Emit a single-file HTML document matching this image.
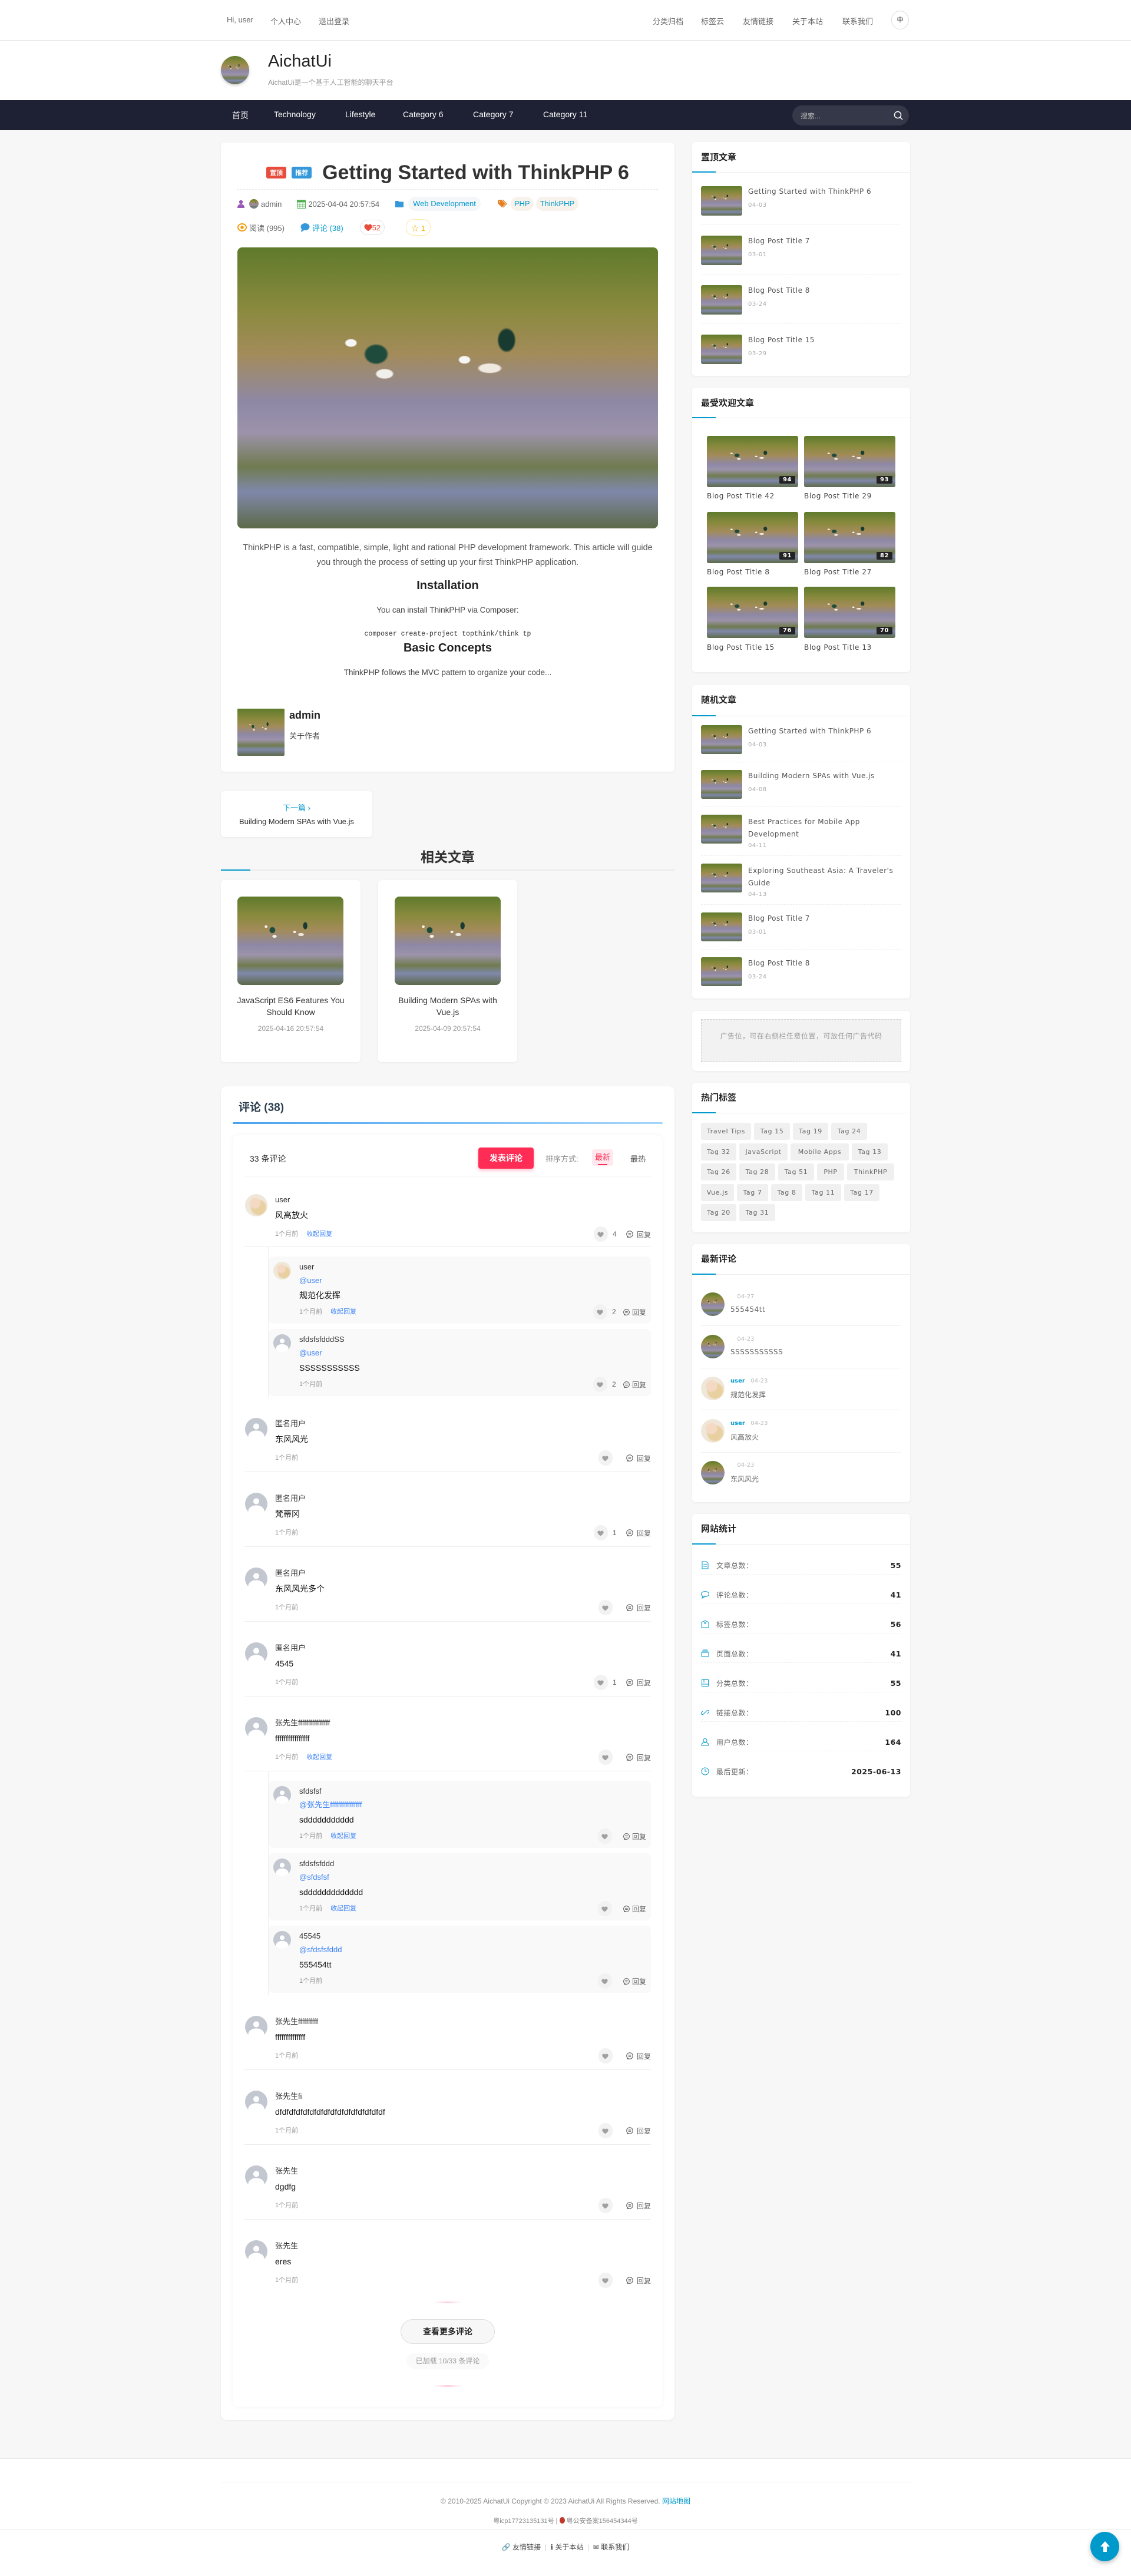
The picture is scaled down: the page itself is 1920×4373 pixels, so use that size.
<!DOCTYPE html>
<html><head><meta charset="utf-8"><style>
*{margin:0;padding:0;box-sizing:border-box}
body{width:1920px;height:4373px;background:#f7f7f7;font-family:"Liberation Sans","Noto Sans CJK SC",sans-serif;color:#333;position:relative;overflow:hidden}
.a{position:absolute}
.card{position:absolute;background:#fff;border-radius:6px;box-shadow:0 1px 4px rgba(0,0,0,.06)}
.bird{position:absolute;overflow:hidden;background:linear-gradient(180deg,#5f7a2c 0%,#8a8a3e 22%,#a38b5a 38%,#8e88a6 55%,#9c93aa 66%,#707b50 78%,#7f88aa 87%,#5d6a48 100%)}
.bird::before{content:"";position:absolute;inset:0;background:radial-gradient(ellipse 4% 5% at 33% 38%,#1f4b3d 0 60%,transparent 75%),radial-gradient(ellipse 3% 2.5% at 35% 45%,#f1efe9 0 60%,transparent 75%),radial-gradient(ellipse 3% 6% at 64% 33%,#183a30 0 60%,transparent 75%),radial-gradient(ellipse 4% 2.5% at 60% 43%,#efe9df 0 60%,transparent 75%),radial-gradient(ellipse 2% 2% at 27% 34%,#f5f5f5 0 60%,transparent 75%),radial-gradient(ellipse 2% 2% at 54% 40%,#f5f5f5 0 60%,transparent 75%)}
.top a{color:#666;font-size:13px;position:absolute;top:26px;text-decoration:none}
.nav span{position:absolute;top:186px;color:#fff;font-size:14px}
.st{position:absolute;left:15px;font:bold 15px "Noto Sans CJK SC",sans-serif;color:#222}
.sh{position:absolute;left:0;right:0;height:1px;background:#eee}
.sh::before{content:"";position:absolute;left:0;top:-1px;width:40px;height:2px;background:#0099cc}
.side{font-family:"DejaVu Sans","Noto Sans CJK SC",sans-serif}
.it .t{position:absolute;left:95px;font-size:12px;color:#555;line-height:17px;letter-spacing:.5px}
.it .d{position:absolute;left:95px;font-size:10px;color:#aaa;letter-spacing:.5px}
.dash{position:absolute;left:15px;right:15px;border-top:1px dashed #eee}
.tags{position:absolute;left:15px;top:68px;width:345px}
.tags div{display:flex;gap:5px;margin-bottom:5.5px}
.tags span{height:29px;line-height:29px;background:#f0f0f0;color:#666;font-size:11px;border-radius:3px;letter-spacing:.6px;text-align:center;white-space:nowrap}
.c{position:relative;height:127px;border-bottom:1px solid #eee}
.av{position:absolute;border-radius:50%;background:#c5c9d2;overflow:hidden}
.av.u{background:radial-gradient(circle at 50% 38%,#fff 0 16%,transparent 17%),radial-gradient(ellipse 36% 26% at 50% 82%,#fff 0 98%,transparent 100%),#c3c7d0}
.av.g{background:radial-gradient(circle at 45% 40%,#f4d9c4 0 25%,transparent 35%),radial-gradient(circle at 60% 60%,#e8d0a0 0 35%,transparent 45%),#efe8da}
.nm{position:absolute;font-size:13px;line-height:20px;color:#333}
.ct{position:absolute;font-size:14px;line-height:24px;color:#111}
.mt{position:absolute;font-size:11px;line-height:20px;color:#999}
.mt b{font-weight:normal;color:#3b82f6;margin-left:14px}
.at{position:absolute;font-size:13px;line-height:22px;color:#3b82f6}
.rt{position:absolute;right:0;display:flex;align-items:center;font-size:12px;color:#666;height:24px}
.hr{width:24px;height:26px;border-radius:12px;background:#f2f2f2;display:flex;align-items:center;justify-content:center;margin-right:8px}
.rb{position:relative;height:114px;background:#f9f9f9;border-radius:8px;margin-bottom:9px}
.rw{margin-left:40px;border-left:1px solid #eee;padding-top:16px}
.stat{position:absolute;left:15px;right:15px;height:20px;font-size:12px;color:#666;display:flex;align-items:center;letter-spacing:.5px}
.stat b{margin-left:auto;color:#222;font-size:12.5px}
.stat svg{margin-right:12px}
</style></head><body>
<svg width="0" height="0" style="position:absolute"><defs>
<symbol id="heart" viewBox="0 0 24 24"><path d="M12 21s-7-4.5-9-9C1.5 8 4 4.5 7.5 4.5c2 0 3.5 1.2 4.5 2.7 1-1.5 2.5-2.7 4.5-2.7C20 4.5 22.5 8 21 12c-2 4.5-9 9-9 9z" fill="#a0a0a0"/></symbol>
<symbol id="rep" viewBox="0 0 24 24"><path d="M12 3a9 9 0 1 0 0 18h-7l2-3" fill="none" stroke="#555" stroke-width="1.8"/><path d="M12 3a9 9 0 0 1 0 18" fill="none" stroke="#555" stroke-width="1.8"/><path d="M8 10h8M8 14h8" stroke="#555" stroke-width="1.8"/></symbol>
</defs></svg>

<div class="a top" style="left:0;top:0;width:1920px;height:69px;background:#fff;border-bottom:1px solid #e6e6e6">
<a style="left:385px">Hi, user</a><a style="left:459px">个人中心</a><a style="left:541px">退出登录</a>
<a style="left:1108px">分类归档</a><a style="left:1190px">标签云</a><a style="left:1261px">友情链接</a><a style="left:1345px">关于本站</a><a style="left:1430px">联系我们</a>
<div class="a" style="left:1513px;top:18px;width:30px;height:32px;border:1px solid #ddd;border-radius:50%;font-size:11px;text-align:center;line-height:30px;color:#333">中</div>
</div>
<div class="a" style="left:0;top:69px;width:1920px;height:101px;background:#fff"></div>
<div class="bird" style="left:375px;top:95px;width:48px;height:48px;border-radius:50%;box-shadow:0 2px 5px rgba(0,0,0,.2)"></div>
<div class="a" style="left:455px;top:88px;font-size:29px;color:#222">AichatUi</div>
<div class="a" style="left:455px;top:131px;font-size:12px;color:#999">AichatUi是一个基于人工智能的聊天平台</div>
<div class="a nav" style="left:0;top:170px;width:1920px;height:51px;background:#1e2133"></div>
<div class="nav"><span style="left:394px">首页</span><span style="left:465px">Technology</span><span style="left:586px">Lifestyle</span><span style="left:684px">Category 6</span><span style="left:803px">Category 7</span><span style="left:922px">Category 11</span></div>
<div class="a" style="left:1345px;top:179px;width:198px;height:34px;background:#353849;border-radius:17px"><span class="a" style="left:14px;top:9px;font-size:12px;color:#bbb">搜索...</span><svg class="a" style="left:172px;top:9px" width="16" height="16" viewBox="0 0 16 16"><circle cx="7" cy="7" r="5.5" fill="none" stroke="#fff" stroke-width="1.5"/><path d="M11 11l4 4" stroke="#fff" stroke-width="1.5"/></svg></div>

<div class="card" style="left:375px;top:242px;width:770px;height:1068px">
<div class="a" style="left:0;right:0;top:31px;height:40px;display:flex;align-items:center;justify-content:center">
<span style="background:#e74c3c;color:#fff;font-size:11px;font-weight:bold;padding:2px 6px;border-radius:3px;margin-right:9px">置顶</span><span style="background:#3498db;color:#fff;font-size:11px;font-weight:bold;padding:2px 6px;border-radius:3px;margin-right:18px">推荐</span><span style="font-size:34px;font-weight:bold;color:#333">Getting Started with ThinkPHP 6</span></div>
<div class="a" style="left:28px;right:28px;top:79px;border-top:1px dashed #e5e5e5"></div>
<div class="a" style="left:28px;top:92px;height:24px;display:flex;align-items:center;font-size:13px;color:#666">
<svg width="12" height="14" viewBox="0 0 12 14"><circle cx="6" cy="4" r="3.2" fill="#9b59b6"/><path d="M0 14c0-5 3-6.5 6-6.5s6 1.5 6 6.5z" fill="#9b59b6"/></svg>
<span class="bird" style="position:relative;width:16px;height:16px;border-radius:50%;margin:0 4px 0 8px"></span>admin
<svg style="margin-left:26px;margin-right:4px" width="15" height="16" viewBox="0 0 15 16"><rect x="0.5" y="2" width="14" height="13.5" fill="none" stroke="#4caf50"/><rect x="0.5" y="2" width="14" height="3.5" fill="#4caf50"/><path d="M1 9h13M1 12h13M5 6v9M10 6v9" stroke="#4caf50" stroke-width=".8"/></svg>2025-04-04 20:57:54
<svg style="margin-left:27px;margin-right:8px" width="14" height="12" viewBox="0 0 14 12"><path d="M0 1h5l1.5 1.5H14V12H0z" fill="#3498db"/></svg>
<span style="background:#f4f6fa;color:#0099cc;padding:0 8px;height:24px;line-height:24px;border-radius:12px">Web Development</span>
<svg style="margin-left:29px;margin-right:6px" width="16" height="14" viewBox="0 0 16 14"><path d="M0 1v5l7 7 6-6-7-7z" fill="#e67e22"/><path d="M8 0l7 7-6 6" fill="none" stroke="#e67e22" stroke-width="1.3"/><circle cx="3" cy="3.5" r="1" fill="#fff"/></svg>
<span style="background:#f7f3ec;color:#0099cc;padding:0 6px;height:24px;line-height:24px;border-radius:12px;margin-right:4px">PHP</span><span style="background:#f7f3ec;color:#0099cc;padding:0 7px;height:24px;line-height:24px;border-radius:12px">ThinkPHP</span></div>
<div class="a" style="left:28px;top:131px;height:26px;display:flex;align-items:center;font-size:13px;color:#666">
<svg width="16" height="14" viewBox="0 0 16 14"><ellipse cx="8" cy="7" rx="7" ry="6" fill="none" stroke="#f39c12" stroke-width="2"/><circle cx="8" cy="7" r="2.8" fill="#f39c12"/></svg><span style="margin-left:4px">阅读 (995)</span>
<svg style="margin-left:27px;margin-right:4px" width="16" height="16" viewBox="0 0 16 16"><ellipse cx="8" cy="7" rx="7.5" ry="6" fill="#3498db"/><path d="M2 11l-1 5 5-3z" fill="#3498db"/></svg><span style="color:#0099cc">评论 (38)</span>
<span style="margin-left:28px;border:1px solid #e5e5e5;border-radius:13px;height:26px;padding:0 6px;display:flex;align-items:center;color:#e74c3c"><svg width="14" height="13" viewBox="0 0 24 22"><path d="M12 21s-9-5.5-11-11C0 5 3 1 7 1c2.5 0 4 1.5 5 3 1-1.5 2.5-3 5-3 4 0 7 4 6 9-2 5.5-11 11-11 11z" fill="#e74c3c"/></svg>52</span>
<span style="margin-left:36px;border:1px solid #fde7a8;border-radius:13px;height:28px;padding:0 8px;display:flex;align-items:center;color:#f5b400">☆ 1</span></div>
<div class="bird" style="left:28px;top:178px;width:714px;height:477px;border-radius:8px"></div>
<div class="a" style="left:35px;right:35px;top:676px;text-align:center;font-size:14.5px;line-height:25px;color:#555">ThinkPHP is a fast, compatible, simple, light and rational PHP development framework. This article will guide you through the process of setting up your first ThinkPHP application.</div>
<div class="a" style="left:0;right:0;top:741px;text-align:center;font-size:20px;font-weight:bold;color:#222">Installation</div>
<div class="a" style="left:0;right:0;top:786px;text-align:center;font-size:13.5px;color:#444">You can install ThinkPHP via Composer:</div>
<div class="a" style="left:0;right:0;top:828px;text-align:center;font:11.5px 'Liberation Mono',monospace;color:#333">composer create-project topthink/think tp</div>
<div class="a" style="left:0;right:0;top:847px;text-align:center;font-size:20px;font-weight:bold;color:#222">Basic Concepts</div>
<div class="a" style="left:0;right:0;top:892px;text-align:center;font-size:13.5px;color:#444">ThinkPHP follows the MVC pattern to organize your code...</div>
<div class="bird" style="left:28px;top:961px;width:80px;height:80px;border-radius:2px"></div>
<div class="a" style="left:116px;top:962px;font-size:18px;font-weight:bold;color:#222">admin</div>
<div class="a" style="left:116px;top:997px;font-size:13px;color:#444">关于作者</div>
</div>

<div class="card" style="left:375px;top:1343px;width:257px;height:78px;text-align:center">
<div class="a" style="left:0;right:0;top:18px;font-size:13px;color:#0099cc">下一篇 ›</div>
<div class="a" style="left:0;right:0;top:44px;font-size:13px;color:#333">Building Modern SPAs with Vue.js</div></div>
<div class="a" style="left:375px;width:770px;top:1438px;text-align:center;font:bold 23px 'Noto Sans CJK SC',sans-serif;color:#333;line-height:30px">相关文章</div>
<div class="a" style="left:375px;width:770px;top:1476px;height:2px;background:#eaeaea"></div>
<div class="a" style="left:375px;width:50px;top:1476px;height:2px;background:#0099cc"></div>
<div class="card" style="left:375px;top:1494px;width:237px;height:309px;text-align:center">
<div class="bird" style="left:28px;top:28px;width:180px;height:150px;border-radius:8px"></div>
<div class="a" style="left:15px;right:15px;top:194px;font-size:14px;line-height:20px;color:#333">JavaScript ES6 Features You Should Know</div>
<div class="a" style="left:0;right:0;top:245px;font-size:12px;color:#999">2025-04-16 20:57:54</div></div>
<div class="card" style="left:642px;top:1494px;width:236px;height:309px;text-align:center">
<div class="bird" style="left:28px;top:28px;width:180px;height:150px;border-radius:8px"></div>
<div class="a" style="left:15px;right:15px;top:194px;font-size:14px;line-height:20px;color:#333">Building Modern SPAs with Vue.js</div>
<div class="a" style="left:0;right:0;top:245px;font-size:12px;color:#999">2025-04-09 20:57:54</div></div>

<div class="card" style="left:375px;top:1844px;width:770px;height:2264px;border-radius:10px">
<div class="a" style="left:30px;top:21px;font-size:19px;font-weight:bold;color:#2c3e50">评论 (38)</div>
<div class="a" style="left:20px;right:20px;top:61px;height:3px;border-radius:2px;background:linear-gradient(90deg,#4aa3f0,#a5d6fb)"></div>
<div class="a" style="left:20px;top:83px;width:730px;height:2159px;background:#fff;border-radius:10px;box-shadow:0 0 8px rgba(0,0,0,.05)">
<div class="a" style="left:29px;top:30px;font-size:14px;color:#333">33 条评论</div>
<div class="a" style="left:417px;top:21px;width:94px;height:36px;background:#ff2d55;border-radius:4px;color:#fff;font-weight:bold;font-size:14px;text-align:center;line-height:36px;box-shadow:0 3px 6px rgba(255,45,85,.3)">发表评论</div>
<div class="a" style="left:531px;top:30px;font-size:13px;color:#888">排序方式:</div>
<div class="a" style="left:610px;top:24px;width:36px;height:28px;background:#ffe9ee;border-radius:4px;color:#ff2d55;font-size:13px;text-align:center;line-height:28px">最新<div class="a" style="left:10px;top:25px;width:16px;height:2px;background:#ff2d55"></div></div>
<div class="a" style="left:675px;top:30px;font-size:13px;color:#555">最热</div>
<div class="a" style="left:20px;right:20px;top:69px;height:1px;background:#eee"></div>

<div class="a" style="left:20px;top:70px;width:690px">
<div class="c" style="height:120px"><div class="a" style="left:0;right:0;top:-5px;bottom:0">
<div class="av g" style="left:1px;top:35px;width:38px;height:38px"></div>
<div class="nm" style="left:52px;top:35px">user</div><div class="ct" style="left:52px;top:59px">风高放火</div>
<div class="mt" style="left:52px;top:93px">1个月前<b>收起回复</b></div>
<div class="rt" style="top:91px"><span class="hr"><svg width="13" height="13"><use href="#heart"/></svg></span><span style="width:22px">4</span><svg width="14" height="14"><use href="#rep"/></svg><span style="margin-left:5px">回复</span></div></div></div>
<div class="rw" style="height:255px">
<div class="rb"><div class="av g" style="left:8px;top:9px;width:30px;height:30px"></div><div class="nm" style="left:52px;top:8px">user</div><div class="at" style="left:52px;top:30px">@user</div><div class="ct" style="left:52px;top:54px">规范化发挥</div><div class="mt" style="left:52px;top:84px">1个月前<b>收起回复</b></div><div class="rt" style="top:82px;right:8px"><span class="hr"><svg width="13" height="13"><use href="#heart"/></svg></span><span style="width:18px">2</span><svg width="13" height="13"><use href="#rep"/></svg><span style="margin-left:3px">回复</span></div></div>
<div class="rb"><div class="av u" style="left:8px;top:9px;width:30px;height:30px"></div><div class="nm" style="left:52px;top:8px">sfdsfsfdddSS</div><div class="at" style="left:52px;top:30px">@user</div><div class="ct" style="left:52px;top:54px">SSSSSSSSSSS</div><div class="mt" style="left:52px;top:84px">1个月前</div><div class="rt" style="top:82px;right:8px"><span class="hr"><svg width="13" height="13"><use href="#heart"/></svg></span><span style="width:18px">2</span><svg width="13" height="13"><use href="#rep"/></svg><span style="margin-left:3px">回复</span></div></div>
</div>
<div class="c"><div class="av u" style="left:1px;top:35px;width:38px;height:38px"></div><div class="nm" style="left:52px;top:35px">匿名用户</div><div class="ct" style="left:52px;top:59px">东风风光</div><div class="mt" style="left:52px;top:93px">1个月前</div><div class="rt" style="top:91px"><span class="hr"><svg width="13" height="13"><use href="#heart"/></svg></span><span style="width:14px"></span><svg width="14" height="14"><use href="#rep"/></svg><span style="margin-left:5px">回复</span></div></div>
<div class="c"><div class="av u" style="left:1px;top:35px;width:38px;height:38px"></div><div class="nm" style="left:52px;top:35px">匿名用户</div><div class="ct" style="left:52px;top:59px">梵蒂冈</div><div class="mt" style="left:52px;top:93px">1个月前</div><div class="rt" style="top:91px"><span class="hr"><svg width="13" height="13"><use href="#heart"/></svg></span><span style="width:22px">1</span><svg width="14" height="14"><use href="#rep"/></svg><span style="margin-left:5px">回复</span></div></div>
<div class="c"><div class="av u" style="left:1px;top:35px;width:38px;height:38px"></div><div class="nm" style="left:52px;top:35px">匿名用户</div><div class="ct" style="left:52px;top:59px">东风风光多个</div><div class="mt" style="left:52px;top:93px">1个月前</div><div class="rt" style="top:91px"><span class="hr"><svg width="13" height="13"><use href="#heart"/></svg></span><span style="width:14px"></span><svg width="14" height="14"><use href="#rep"/></svg><span style="margin-left:5px">回复</span></div></div>
<div class="c"><div class="av u" style="left:1px;top:35px;width:38px;height:38px"></div><div class="nm" style="left:52px;top:35px">匿名用户</div><div class="ct" style="left:52px;top:59px">4545</div><div class="mt" style="left:52px;top:93px">1个月前</div><div class="rt" style="top:91px"><span class="hr"><svg width="13" height="13"><use href="#heart"/></svg></span><span style="width:22px">1</span><svg width="14" height="14"><use href="#rep"/></svg><span style="margin-left:5px">回复</span></div></div>
<div class="c"><div class="av u" style="left:1px;top:35px;width:38px;height:38px"></div><div class="nm" style="left:52px;top:35px">张先生ffffffffffffffff</div><div class="ct" style="left:52px;top:59px">ffffffffffffffff</div><div class="mt" style="left:52px;top:93px">1个月前<b>收起回复</b></div><div class="rt" style="top:91px"><span class="hr"><svg width="13" height="13"><use href="#heart"/></svg></span><span style="width:14px"></span><svg width="14" height="14"><use href="#rep"/></svg><span style="margin-left:5px">回复</span></div></div>
<div class="rw" style="height:380px">
<div class="rb"><div class="av u" style="left:8px;top:9px;width:30px;height:30px"></div><div class="nm" style="left:52px;top:8px">sfdsfsf</div><div class="at" style="left:52px;top:30px">@张先生ffffffffffffffff</div><div class="ct" style="left:52px;top:54px">sddddddddddd</div><div class="mt" style="left:52px;top:84px">1个月前<b>收起回复</b></div><div class="rt" style="top:82px;right:8px"><span class="hr"><svg width="13" height="13"><use href="#heart"/></svg></span><span style="width:10px"></span><svg width="13" height="13"><use href="#rep"/></svg><span style="margin-left:3px">回复</span></div></div>
<div class="rb"><div class="av u" style="left:8px;top:9px;width:30px;height:30px"></div><div class="nm" style="left:52px;top:8px">sfdsfsfddd</div><div class="at" style="left:52px;top:30px">@sfdsfsf</div><div class="ct" style="left:52px;top:54px">sddddddddddddd</div><div class="mt" style="left:52px;top:84px">1个月前<b>收起回复</b></div><div class="rt" style="top:82px;right:8px"><span class="hr"><svg width="13" height="13"><use href="#heart"/></svg></span><span style="width:10px"></span><svg width="13" height="13"><use href="#rep"/></svg><span style="margin-left:3px">回复</span></div></div>
<div class="rb"><div class="av u" style="left:8px;top:9px;width:30px;height:30px"></div><div class="nm" style="left:52px;top:8px">45545</div><div class="at" style="left:52px;top:30px">@sfdsfsfddd</div><div class="ct" style="left:52px;top:54px">555454tt</div><div class="mt" style="left:52px;top:84px">1个月前</div><div class="rt" style="top:82px;right:8px"><span class="hr"><svg width="13" height="13"><use href="#heart"/></svg></span><span style="width:10px"></span><svg width="13" height="13"><use href="#rep"/></svg><span style="margin-left:3px">回复</span></div></div>
</div>
<div class="c"><div class="av u" style="left:1px;top:35px;width:38px;height:38px"></div><div class="nm" style="left:52px;top:35px">张先生ffffffffff</div><div class="ct" style="left:52px;top:59px">ffffffffffffff</div><div class="mt" style="left:52px;top:93px">1个月前</div><div class="rt" style="top:91px"><span class="hr"><svg width="13" height="13"><use href="#heart"/></svg></span><span style="width:14px"></span><svg width="14" height="14"><use href="#rep"/></svg><span style="margin-left:5px">回复</span></div></div>
<div class="c"><div class="av u" style="left:1px;top:35px;width:38px;height:38px"></div><div class="nm" style="left:52px;top:35px">张先生fi</div><div class="ct" style="left:52px;top:59px">dfdfdfdfdfdfdfdfdfdfdfdfdfdfdfdf</div><div class="mt" style="left:52px;top:93px">1个月前</div><div class="rt" style="top:91px"><span class="hr"><svg width="13" height="13"><use href="#heart"/></svg></span><span style="width:14px"></span><svg width="14" height="14"><use href="#rep"/></svg><span style="margin-left:5px">回复</span></div></div>
<div class="c"><div class="av u" style="left:1px;top:35px;width:38px;height:38px"></div><div class="nm" style="left:52px;top:35px">张先生</div><div class="ct" style="left:52px;top:59px">dgdfg</div><div class="mt" style="left:52px;top:93px">1个月前</div><div class="rt" style="top:91px"><span class="hr"><svg width="13" height="13"><use href="#heart"/></svg></span><span style="width:14px"></span><svg width="14" height="14"><use href="#rep"/></svg><span style="margin-left:5px">回复</span></div></div>
<div class="c" style="border:none"><div class="av u" style="left:1px;top:35px;width:38px;height:38px"></div><div class="nm" style="left:52px;top:35px">张先生</div><div class="ct" style="left:52px;top:59px">eres</div><div class="mt" style="left:52px;top:93px">1个月前</div><div class="rt" style="top:91px"><span class="hr"><svg width="13" height="13"><use href="#heart"/></svg></span><span style="width:14px"></span><svg width="14" height="14"><use href="#rep"/></svg><span style="margin-left:5px">回复</span></div></div>
</div>
<div class="a" style="left:341px;top:1980px;width:48px;height:3px;background:linear-gradient(90deg,transparent,#fbd0da,transparent)"></div>
<div class="a" style="left:285px;top:2010px;width:160px;height:42px;border:1px solid #ddd;border-radius:21px;background:#f7f7f7;text-align:center;line-height:40px;font-size:14px;font-weight:bold;color:#222">查看更多评论</div>
<div class="a" style="left:295px;top:2067px;width:140px;height:28px;border-radius:14px;background:#fafafa;text-align:center;line-height:28px;font-size:12px;color:#999">已加载 10/33 条评论</div>
<div class="a" style="left:341px;top:2122px;width:48px;height:3px;background:linear-gradient(90deg,transparent,#fbd0da,transparent)"></div>
</div>
</div>

<div class="side">
<div class="card" style="left:1175px;top:241px;width:370px;height:397px">
<div class="st" style="top:15px">置顶文章</div><div class="sh" style="top:51px"></div>
<div class="it">
<div class="bird" style="left:15px;top:75px;width:70px;height:50px;border-radius:3px"></div><div class="t" style="top:76px">Getting Started with ThinkPHP 6</div><div class="d" style="top:102px">04-03</div>
<div class="dash" style="top:140px"></div>
<div class="bird" style="left:15px;top:159px;width:70px;height:50px;border-radius:3px"></div><div class="t" style="top:160px">Blog Post Title 7</div><div class="d" style="top:186px">03-01</div>
<div class="dash" style="top:224px"></div>
<div class="bird" style="left:15px;top:243px;width:70px;height:50px;border-radius:3px"></div><div class="t" style="top:244px">Blog Post Title 8</div><div class="d" style="top:270px">03-24</div>
<div class="dash" style="top:308px"></div>
<div class="bird" style="left:15px;top:327px;width:70px;height:50px;border-radius:3px"></div><div class="t" style="top:328px">Blog Post Title 15</div><div class="d" style="top:354px">03-29</div>
</div></div>

<div class="card" style="left:1175px;top:658px;width:370px;height:483px">
<div class="st" style="top:15px">最受欢迎文章</div><div class="sh" style="top:51px"></div>
</div>
<div class="a" style="left:1200px;top:740px;width:320px;font-size:12px;color:#444;letter-spacing:.6px">
<div class="bird" style="left:0;top:0;width:155px;height:87px;border-radius:3px"></div><div class="a" style="left:123px;top:68px;background:#222;color:#fff;font-weight:bold;font-size:10px;padding:1px 6px;border-radius:2px">94</div><div class="a" style="left:0;top:95px">Blog Post Title 42</div>
<div class="bird" style="left:165px;top:0;width:155px;height:87px;border-radius:3px"></div><div class="a" style="left:288px;top:68px;background:#222;color:#fff;font-weight:bold;font-size:10px;padding:1px 6px;border-radius:2px">93</div><div class="a" style="left:165px;top:95px">Blog Post Title 29</div>
<div class="bird" style="left:0;top:129px;width:155px;height:87px;border-radius:3px"></div><div class="a" style="left:123px;top:197px;background:#222;color:#fff;font-weight:bold;font-size:10px;padding:1px 6px;border-radius:2px">91</div><div class="a" style="left:0;top:224px">Blog Post Title 8</div>
<div class="bird" style="left:165px;top:129px;width:155px;height:87px;border-radius:3px"></div><div class="a" style="left:288px;top:197px;background:#222;color:#fff;font-weight:bold;font-size:10px;padding:1px 6px;border-radius:2px">82</div><div class="a" style="left:165px;top:224px">Blog Post Title 27</div>
<div class="bird" style="left:0;top:256px;width:155px;height:87px;border-radius:3px"></div><div class="a" style="left:123px;top:324px;background:#222;color:#fff;font-weight:bold;font-size:10px;padding:1px 6px;border-radius:2px">76</div><div class="a" style="left:0;top:352px">Blog Post Title 15</div>
<div class="bird" style="left:165px;top:256px;width:155px;height:87px;border-radius:3px"></div><div class="a" style="left:288px;top:324px;background:#222;color:#fff;font-weight:bold;font-size:10px;padding:1px 6px;border-radius:2px">70</div><div class="a" style="left:165px;top:352px">Blog Post Title 13</div>
</div>

<div class="card" style="left:1175px;top:1163px;width:370px;height:532px">
<div class="st" style="top:14px">随机文章</div><div class="sh" style="top:52px"></div>
<div class="it">
<div class="bird" style="left:15px;top:68px;width:70px;height:49px;border-radius:3px"></div><div class="t" style="top:70px">Getting Started with ThinkPHP 6</div><div class="d" style="top:96px">04-03</div>
<div class="dash" style="top:130px"></div>
<div class="bird" style="left:15px;top:144px;width:70px;height:49px;border-radius:3px"></div><div class="t" style="top:146px">Building Modern SPAs with Vue.js</div><div class="d" style="top:172px">04-08</div>
<div class="dash" style="top:206px"></div>
<div class="bird" style="left:15px;top:220px;width:70px;height:49px;border-radius:3px"></div><div class="t" style="top:222px;width:255px;line-height:21px">Best Practices for Mobile App Development</div><div class="d" style="top:267px">04-11</div>
<div class="dash" style="top:289px"></div>
<div class="bird" style="left:15px;top:303px;width:70px;height:49px;border-radius:3px"></div><div class="t" style="top:305px;width:260px;line-height:21px">Exploring Southeast Asia: A Traveler's Guide</div><div class="d" style="top:350px">04-13</div>
<div class="dash" style="top:372px"></div>
<div class="bird" style="left:15px;top:386px;width:70px;height:49px;border-radius:3px"></div><div class="t" style="top:388px">Blog Post Title 7</div><div class="d" style="top:414px">03-01</div>
<div class="dash" style="top:448px"></div>
<div class="bird" style="left:15px;top:462px;width:70px;height:49px;border-radius:3px"></div><div class="t" style="top:464px">Blog Post Title 8</div><div class="d" style="top:490px">03-24</div>
</div></div>

<div class="card" style="left:1175px;top:1716px;width:370px;height:102px">
<div class="a" style="left:15px;top:14px;width:340px;height:73px;background:#f2f2f2;border:1px dashed #ccc;text-align:center;font-size:12px;line-height:21px;color:#999;padding:18px 20px 0;letter-spacing:.5px">广告位，可在右侧栏任意位置，可放任何广告代码</div></div>

<div class="card" style="left:1175px;top:1838px;width:370px;height:254px">
<div class="st" style="top:14px">热门标签</div><div class="sh" style="top:51px"></div>
<div class="tags">
<div><span style="width:85px">Travel Tips</span><span style="width:61px">Tag 15</span><span style="width:60px">Tag 19</span><span style="width:61px">Tag 24</span></div>
<div><span style="width:60px">Tag 32</span><span style="width:82px">JavaScript</span><span style="width:99px">Mobile Apps</span><span style="width:61px">Tag 13</span></div>
<div><span style="width:60px">Tag 26</span><span style="width:61px">Tag 28</span><span style="width:61px">Tag 51</span><span style="width:46px">PHP</span><span style="width:80px">ThinkPHP</span></div>
<div><span style="width:56px">Vue.js</span><span style="width:53px">Tag 7</span><span style="width:53px">Tag 8</span><span style="width:61px">Tag 11</span><span style="width:60px">Tag 17</span></div>
<div><span style="width:60px">Tag 20</span><span style="width:61px">Tag 31</span></div>
</div></div>

<div class="card" style="left:1175px;top:2112px;width:370px;height:438px">
<div class="st" style="top:14px">最新评论</div><div class="sh" style="top:51px"></div>
<div class="bird" style="left:15px;top:82px;width:40px;height:40px;border-radius:50%"></div><div class="a" style="left:70px;top:84px;font-size:10px;color:#bbb">&nbsp;&nbsp;04-27</div><div class="a" style="left:65px;top:104px;font-size:12px;color:#666;letter-spacing:.5px">555454tt</div>
<div class="a" style="left:15px;right:15px;top:138px;height:1px;background:#f0f0f0"></div>
<div class="bird" style="left:15px;top:154px;width:40px;height:40px;border-radius:50%"></div><div class="a" style="left:70px;top:156px;font-size:10px;color:#bbb">&nbsp;&nbsp;04-23</div><div class="a" style="left:65px;top:176px;font-size:12px;color:#666;letter-spacing:.5px">SSSSSSSSSSS</div>
<div class="a" style="left:15px;right:15px;top:210px;height:1px;background:#f0f0f0"></div>
<div class="av g" style="left:15px;top:225px;width:40px;height:40px"></div><div class="a" style="left:65px;top:227px;font-size:10px;color:#bbb"><b style="color:#0099cc">user</b>&nbsp;&nbsp;&nbsp;04-23</div><div class="a" style="left:65px;top:247px;font-size:12px;color:#666">规范化发挥</div>
<div class="a" style="left:15px;right:15px;top:281px;height:1px;background:#f0f0f0"></div>
<div class="av g" style="left:15px;top:297px;width:40px;height:40px"></div><div class="a" style="left:65px;top:299px;font-size:10px;color:#bbb"><b style="color:#0099cc">user</b>&nbsp;&nbsp;&nbsp;04-23</div><div class="a" style="left:65px;top:319px;font-size:12px;color:#666">风高放火</div>
<div class="a" style="left:15px;right:15px;top:353px;height:1px;background:#f0f0f0"></div>
<div class="bird" style="left:15px;top:368px;width:40px;height:40px;border-radius:50%"></div><div class="a" style="left:70px;top:370px;font-size:10px;color:#bbb">&nbsp;&nbsp;04-23</div><div class="a" style="left:65px;top:390px;font-size:12px;color:#666">东风风光</div>
</div>

<div class="card" style="left:1175px;top:2570px;width:370px;height:480px">
<div class="st" style="top:14px">网站统计</div><div class="sh" style="top:51px"></div>
<div class="stat" style="top:77px"><svg width="14" height="14" viewBox="0 0 14 14" fill="none" stroke="#0099cc"><path d="M2 1h7l3 3v9H2z M4 6h6M4 9h6"/></svg>文章总数：<b>55</b></div><div class="dash" style="top:102px"></div>
<div class="stat" style="top:127px"><svg width="14" height="14" viewBox="0 0 14 14" fill="none" stroke="#0099cc"><ellipse cx="7" cy="6" rx="6.5" ry="4.5"/><path d="M3 10l-1 3 4-2"/></svg>评论总数：<b>41</b></div><div class="dash" style="top:152px"></div>
<div class="stat" style="top:177px"><svg width="14" height="14" viewBox="0 0 14 14" fill="none" stroke="#0099cc"><path d="M1 4l6-3 6 3v9H1z"/><circle cx="7" cy="5" r="1.2"/></svg>标签总数：<b>56</b></div><div class="dash" style="top:202px"></div>
<div class="stat" style="top:227px"><svg width="14" height="14" viewBox="0 0 14 14" fill="none" stroke="#0099cc"><rect x="1" y="5" width="12" height="7"/><path d="M2 3h10M3 1h8"/></svg>页面总数：<b>41</b></div><div class="dash" style="top:252px"></div>
<div class="stat" style="top:277px"><svg width="14" height="14" viewBox="0 0 14 14" fill="none" stroke="#0099cc"><rect x="1.5" y="1.5" width="11" height="11"/><path d="M1.5 9h11M5 1.5v5"/></svg>分类总数：<b>55</b></div><div class="dash" style="top:302px"></div>
<div class="stat" style="top:327px"><svg width="14" height="14" viewBox="0 0 14 14" fill="none" stroke="#0099cc"><path d="M6 8l-2 2a2 2 0 0 1-3-3l2-2M8 6l2-2a2 2 0 0 1 3 3l-2 2M5 9l4-4"/></svg>链接总数：<b>100</b></div><div class="dash" style="top:352px"></div>
<div class="stat" style="top:377px"><svg width="14" height="14" viewBox="0 0 14 14" fill="none" stroke="#0099cc"><circle cx="7" cy="4.5" r="3"/><path d="M1 13c0-4 3-5 6-5s6 1 6 5z"/></svg>用户总数：<b>164</b></div><div class="dash" style="top:402px"></div>
<div class="stat" style="top:427px"><svg width="14" height="14" viewBox="0 0 14 14" fill="none" stroke="#0099cc"><circle cx="7" cy="7" r="6"/><path d="M7 3v4h3"/></svg>最后更新：<b>2025-06-13</b></div>
</div>
</div>

<div class="a" style="left:0;top:4173px;width:1920px;height:200px;background:#fff;border-top:1px solid #e8e8e8"></div>
<div class="a" style="left:375px;top:4213px;width:1170px;height:1px;background:#eee"></div>
<div class="a" style="left:0;width:1920px;top:4237px;text-align:center;font-size:12px;color:#888">© 2010-2025 AichatUi Copyright © 2023 AichatUi All Rights Reserved. <span style="color:#0099cc">网站地图</span></div>
<div class="a" style="left:0;width:1920px;top:4271px;text-align:center;font-size:11px;color:#888">粤icp17723135131号 | <span style="display:inline-block;width:9px;height:11px;border-radius:50%;background:#c0392b;vertical-align:-1px"></span> 粤公安备案156454344号</div>
<div class="a" style="left:0;top:4294px;width:1920px;height:1px;background:#eee"></div>
<div class="a" style="left:0;width:1920px;top:4315px;text-align:center;font-size:12px;color:#444">🔗 友情链接 &nbsp;<span style="color:#ccc">|</span>&nbsp; ℹ 关于本站 &nbsp;<span style="color:#ccc">|</span>&nbsp; ✉ 联系我们</div>
<div class="a" style="left:1851px;top:4298px;width:49px;height:50px;border-radius:50%;background:#0099cc;box-shadow:0 3px 8px rgba(0,0,0,.25)"><svg class="a" style="left:15px;top:14px" width="20" height="22" viewBox="0 0 20 22"><path d="M10 2l8 9h-5v9H7v-9H2z" fill="#fff"/></svg></div>
</body></html>
